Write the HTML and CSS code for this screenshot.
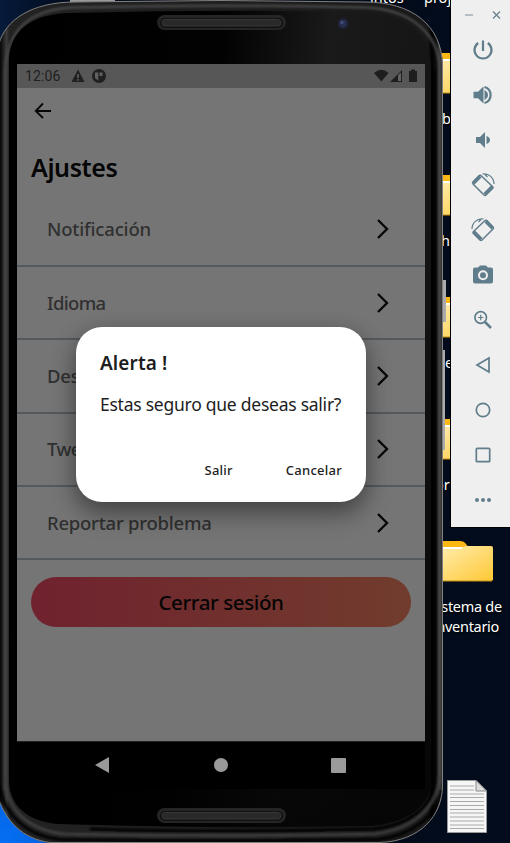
FILE: index.html
```html
<!DOCTYPE html>
<html lang="es">
<head>
<meta charset="utf-8">
<title>Ajustes</title>
<link rel="stylesheet" href="styles.css">
</head>
<body>
<svg width="0" height="0" class="defs">
  <defs>
    <linearGradient id="fold" x1="0" y1="0" x2="1" y2="1"><stop offset="0" stop-color="#ffeeb4"/><stop offset="1" stop-color="#ffc834"/></linearGradient>
    <symbol id="folder" viewBox="0 0 62 44"><path d="M2 2H27Q31 2 33 5L36 9H60V41H2Z" fill="#fdb813"/><path d="M2 8H29L34 7H58Q60 7 60 9V40Q60 42 58 42H2Z" fill="url(#fold)"/><path d="M2 9H29" stroke="#fff" stroke-width="2"/><path d="M2 42H59" stroke="#c58f12"/></symbol>
    <symbol id="chevron" viewBox="0 0 14 22"><path d="M2 2L11 11L2 20" fill="none" stroke="#050505" stroke-width="2.3"/></symbol>
  </defs>
</svg>
<div class="desktop">
  <span class="label top-label">intos</span><span class="label top-label2">proj</span>
  <svg class="folder f1"><use href="#folder"/></svg><span class="label l1">b</span>
  <svg class="folder f2"><use href="#folder"/></svg><span class="label l2">h</span>
  <svg class="folder f3"><use href="#folder"/></svg><span class="label l3">e</span>
  <svg class="folder f4"><use href="#folder"/></svg><span class="label l4">or</span>
  <svg class="folder f5"><use href="#folder"/></svg><span class="label l5">Sistema de<br>inventario</span>
  <svg class="document" viewBox="0 0 40 53"><path d="M.5.5H29L39.5 11V52.500H.5Z" fill="#f6f6f6" stroke="#999"/><path d="M29 .5V11H39.500Z" fill="#ddd" stroke="#888"/><path d="M3 6H27M3 10H27M3 14H37M3 17.500H37M3 21.500H37M3 25.500H37M3 29.500H37M3 33H37M3 37H37M3 41H37M3 45H37M3 48.500H37" stroke="#aaa"/></svg>

  <svg class="frame" viewBox="0 0 454 843">
    <defs>
      <linearGradient id="edge" x1="0" x2="443" y1="0" y2="0" gradientUnits="userSpaceOnUse"><stop offset="0" stop-color="#060606"/><stop offset=".008" stop-color="#222"/><stop offset=".015" stop-color="#3c3c3c"/><stop offset=".021" stop-color="#222"/><stop offset=".965" stop-color="#191919"/><stop offset=".975" stop-color="#000"/><stop offset=".985" stop-color="#101010"/><stop offset=".992" stop-color="#3c3c3c"/><stop offset="1" stop-color="#202020"/></linearGradient>
      <linearGradient id="face" x1="0" x2="1" y1="0" y2=".15"><stop offset="0" stop-color="#000"/><stop offset=".5" stop-color="#020202"/><stop offset=".75" stop-color="#1a1a1a"/><stop offset="1" stop-color="#151515"/></linearGradient>
      <linearGradient id="shade" x1="0" x2="0" y1="0" y2="1"><stop offset=".2" stop-color="#000" stop-opacity="0"/><stop offset="1" stop-color="#000" stop-opacity=".75"/></linearGradient>
      <filter id="soft" filterUnits="userSpaceOnUse" x="-10" y="-10" width="470" height="870"><feGaussianBlur stdDeviation="1.1"/></filter>
      <clipPath id="body"><path d="M-1 44C5 20 32 2 75 2Q220 -1 365 2C412 2 442 25 443 66V785C443 816 420 841 380 843H50C22 839 6 820 -1 800Z"/></clipPath>
    </defs>
    <path d="M442 280H446V322H442ZM442 350H445V450H442Z" fill="#aaa"/>
    <path d="M70 0H115V4H70Z" fill="#999"/>
    <g clip-path="url(#body)">
      <path d="M-2 0H445V843H-2Z" fill="url(#edge)"/>
      <g fill="none" filter="url(#soft)">
        <path d="M5 790V75C5 31 28 9 75 7.500Q220 4 365 7.500C410 9 439 33 440 70V783" stroke="#464646" stroke-width="2.500"/>
        <path d="M441 790C439 814 412 836 378 839.500Q220 842 60 839.500C27 836 4 815 -1 785" stroke="#000" stroke-width="3"/>
        <path d="M440 775C438 810 410 830 374 834Q220 837 65 834C27 830 5 809 5 775" stroke="#424242" stroke-width="2.500"/>
        <path d="M434 70V780C434 808 407 826 372 829Q220 833 90 829" stroke="#000" stroke-width="3"/>
      </g>
      <path d="M9 62C9 30 32 14 70 13Q220 9 363 12C402 13 431 32 431 68V780C431 806 408 823 370 826Q220 829 60 824C27 822 9 805 9 779Z" fill="url(#face)"/>
      <path d="M9 62H431V780C431 806 408 823 370 826Q220 829 60 824C27 822 9 805 9 779Z" fill="url(#shade)"/>
    </g>
    <path d="M-1 44C5 20 32 2 75 2Q220 -1 365 2C412 2 442 25 442.500 66V785C442.500 816 420 841 380 842.500H50C22 839 6 820 -1 800" fill="none" stroke="#808080" stroke-width="1"/>
    <g id="speaker"><rect x="157" y="15" width="129" height="15" rx="7.500" fill="#252525"/><rect x="160" y="18" width="123" height="10" rx="5" fill="#111"/><rect x="162" y="19.500" width="119" height="6.500" rx="3.200" fill="#292929" stroke="#383838"/></g>
    <use href="#speaker" y="793"/>
    <circle cx="343" cy="23.500" r="6" fill="#1d1e2c"/><circle cx="343" cy="23.500" r="4" fill="#292f50"/><circle cx="342" cy="22.500" r="1.500" fill="#445082"/>
  </svg>

  <main class="screen">
    <div class="status">
      <span class="time">12:06</span>
      <svg width="14" height="14" viewBox="0 0 14 14"><path d="M7 .5L13.500 13H.5Z" fill="#202020"/><path d="M7 5V9M7 10V11.700" stroke="#666" stroke-width="1.400"/></svg>
      <svg width="14" height="14" viewBox="0 0 14 14"><circle cx="7" cy="7" r="7" fill="#202020"/><path d="M3 3.500H6.300V11.500L3 9Z M7.500 3.500H10.500V7H7.500Z" fill="#606060"/></svg>
      <svg class="signals" width="44" height="14" viewBox="0 0 44 14"><path d="M0 4Q7.300-2.500 14.600 4L7.300 12.500Z M28 1V13H16Z M35 2H37V.500H41V2H43V13H35Z" fill="#1e1e1e"/><path d="M24 6L27 3.500V12H24Z" fill="#626262"/></svg>
    </div>
    <div class="app">
      <svg class="back" width="18" height="18" viewBox="0 0 18 18"><path d="M17 9H2M9 1.500L1.700 9L9 16" fill="none" stroke="#050505" stroke-width="1.800"/></svg>
      <h1>Ajustes</h1>
      <ul class="list">
        <li><span>Notificación</span><svg><use href="#chevron"/></svg></li>
        <li><span class="short">Idioma</span><svg><use href="#chevron"/></svg></li>
        <li><span>Des</span><svg><use href="#chevron"/></svg></li>
        <li><span class="short">Twe</span><svg><use href="#chevron"/></svg></li>
        <li><span class="long">Reportar problema</span><svg><use href="#chevron"/></svg></li>
      </ul>
      <div class="logout"><span>Cerrar sesión</span></div>
    </div>
    <div class="nav">
      <svg width="408" height="47" viewBox="0 0 408 47"><path d="M78 23L92 15V31Z" fill="#9a9a9a"/><circle cx="204" cy="23" r="7" fill="#9a9a9a"/><rect x="314" y="16" width="15" height="15" rx="1" fill="#9a9a9a"/></svg>
    </div>
    <section class="dialog">
      <h2>Alerta !</h2>
      <p>Estas seguro que deseas salir?</p>
      <div class="actions"><span>Salir</span><span>Cancelar</span></div>
    </section>
  </main>

  <aside class="toolbar">
    <div class="window"><svg width="60" height="30" viewBox="0 0 60 30"><path d="M14 15H22" stroke="#a8b4ba" stroke-width="1.600"/><path d="M42 11.500L49 18.500M49 11.500L42 18.500" stroke="#6c838e" stroke-width="1.300"/></svg></div>
    <svg viewBox="0 0 24 24"><path d="M12 2.500V13M7.200 5A8.500 8.500 0 1 0 16.800 5" class="line thick"/></svg>
    <svg viewBox="0 0 24 24"><path d="M2.500 8.800H7L12.500 3.500V20.500L7 15.200H2.500ZM13.500 7Q17 9 17 12T13.500 17Z"/><path d="M13.500 4A8.300 8.300 0 0 1 13.500 20" class="line thick"/></svg>
    <svg viewBox="0 0 24 24"><path d="M5 9H9L14 4V20L9 15H5ZM15.500 8Q19 9.500 19 12T15.500 16Z"/></svg>
    <svg viewBox="0 0 24 24"><g id="rotate"><path d="M7.500 3.200L2 9Q1 10 2 11L13 22Q14 23 15 22L21.500 15.500Q22.500 14.500 21.500 13.500L10.500 3Q9 1.700 7.500 3.200Z" class="line"/><path d="M8 2L1 9L3.500 11.500L10.500 4.500ZM20 12.500L12.500 20L15 22.500L22.500 15Z"/><path d="M11.500 1C18 0 23 5 23 11M14 1.500L16.500 4" class="line thin"/></g></svg>
    <svg viewBox="0 0 24 24"><use href="#rotate" transform="matrix(-1 0 0 1 24 0)"/></svg>
    <svg viewBox="0 0 24 24"><path fill-rule="evenodd" d="M9 2.500H15L17 4.500H20Q22 4.500 22 6.500V18.500Q22 20.500 20 20.500H4Q2 20.500 2 18.500V6.500Q2 4.500 4 4.500H7ZM12 7.200A5 5 0 1 0 12 17.200A5 5 0 1 0 12 7.200M12 9.200A3 3 0 1 1 12 15.200A3 3 0 1 1 12 9.200"/></svg>
    <svg viewBox="0 0 24 24"><circle cx="9.700" cy="9.500" r="5.800" class="line fine"/><path d="M14 14L20 20" class="line heavy"/><path d="M9.700 6.800V12.200M7 9.500H12.400" class="line thin"/></svg>
    <svg viewBox="0 0 24 24"><path d="M6 12L18 5V19Z" class="line fine"/></svg>
    <svg viewBox="0 0 24 24"><circle cx="12" cy="12" r="6.700" class="line fine"/></svg>
    <svg viewBox="0 0 24 24"><rect x="5.300" y="5.300" width="13.400" height="13.400" rx="1" class="line fine"/></svg>
    <svg viewBox="0 0 24 24"><circle cx="6" cy="12" r="2"/><circle cx="12" cy="12" r="2"/><circle cx="18" cy="12" r="2"/></svg>
  </aside>
</div>
</body>
</html>
```
FILE: styles.css
```css
* { box-sizing: border-box; }
body { margin: 0; font-family: "Noto Sans", sans-serif; }
.defs { position: absolute; }
.desktop { position: relative; width: 510px; height: 843px; overflow: hidden; background: radial-gradient(circle at 0 843px, #0470f5 0, #0560dd 55px, transparent 85px), linear-gradient(90deg, #061a3a, #020a19 15%, #030c1c); }
.frame { position: absolute; left: 0; top: 0; width: 454px; height: 843px; }

.folder { position: absolute; left: 433px; width: 62px; height: 44px; }
.f1 { top: 51px; }
.f2 { top: 173px; }
.f3 { top: 295px; }
.f4 { top: 417px; }
.f5 { top: 539px; }
.label { position: absolute; color: #fff; font-size: 14.5px; line-height: 20px; text-align: center; text-shadow: 1px 1px 2px #000; white-space: nowrap; }
.top-label { left: 370px; top: -13px; }
.top-label2 { left: 424px; top: -13px; }
.l1 { left: 442px; top: 108px; }
.l2 { left: 441px; top: 230px; }
.l3 { left: 445px; top: 352px; }
.l4 { left: 435px; top: 474px; }
.l5 { left: 424px; top: 596px; width: 84px; letter-spacing: -.3px; }
.document { position: absolute; left: 447px; top: 780px; width: 40px; height: 53px; }

.screen { position: relative; width: 408px; height: 725px; margin-left: 17px; top: 64px; display: flex; flex-direction: column; }
.status { height: 24px; display: flex; align-items: center; gap: 7px; padding: 0 7px 0 8px; background: #575757; color: #202020; }
.time { width: 39px; font: 14px Roboto, sans-serif; letter-spacing: .1px; }
.signals { margin-left: auto; }
.app { height: 653px; background: #757575; color: #050505; display: flex; flex-direction: column; }
.back { margin: 14px 0 0 17px; flex: none; }
h1 { margin: 29px 0 0 14px; height: 44.5px; flex: none; line-height: 36px; font-size: 25px; font-weight: 600; letter-spacing: -.4px; }
.list { margin: 0; padding: 0; list-style: none; display: grid; grid-auto-rows: 73.4px; }
.list li { display: flex; align-items: center; justify-content: space-between; border-bottom: 2px solid #54595d; padding: 0 35px 0 30px; color: #303030; font-size: 18.5px; font-weight: 500; letter-spacing: -.17px; }
.list span { padding-bottom: 1px; }
.list .short { letter-spacing: -.65px; }
.list .long { letter-spacing: -.24px; }
.list svg { width: 14px; height: 22px; }
.logout { margin: 16.5px 14px 0; height: 50px; flex: none; border-radius: 25px; display: flex; align-items: center; justify-content: center; background: linear-gradient(90deg, #70222e, #713c2d); font-size: 20.5px; font-weight: 500; letter-spacing: -.38px; }
.nav { height: 48px; background: #000; border-top: 1px solid #222; }
.nav svg { display: block; }

.dialog { position: absolute; left: 59px; top: 263px; width: 290px; height: 175px; padding: 22px 24px 0; border-radius: 26px; background: #fff; color: #1d1d1d; box-shadow: 0 12px 24px rgba(0,0,0,.35), 0 4px 22px rgba(0,0,0,.15); }
h2 { margin: 0; font-size: 19px; line-height: 28px; font-weight: 600; letter-spacing: .1px; }
p { margin: 13px 0 0; font-size: 17.5px; line-height: 28px; white-space: nowrap; letter-spacing: -.25px; }
.actions { display: flex; justify-content: flex-end; gap: 53px; margin-top: 42px; font-size: 13px; line-height: 20px; font-weight: 500; letter-spacing: .25px; }

.toolbar { position: absolute; left: 450px; top: 0; width: 60px; height: 528px; background: #efefef; border-left: 1px solid #000; border-bottom: 1px solid #000; display: flex; flex-direction: column; align-items: center; gap: 21px; fill: #607d8b; }
.window { height: 17px; }
.toolbar > svg { width: 24px; height: 24px; flex: none; overflow: visible; margin-left: 5px; }
.window svg { display: block; }
.line { fill: none; stroke: #607d8b; stroke-width: 1.5; }
.thick { stroke-width: 2.2; }
.heavy { stroke-width: 2.5; }
.thin { stroke-width: 1.2; }
.fine { stroke-width: 1.7; }
```
